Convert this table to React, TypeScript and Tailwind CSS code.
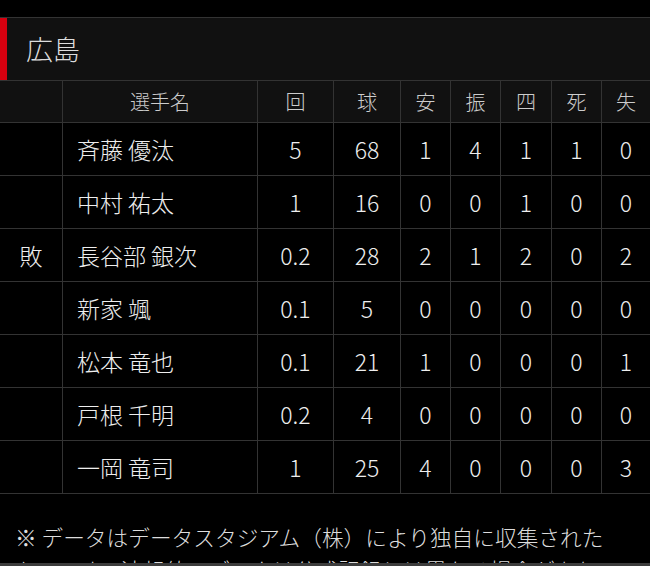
const heads = ["", "選手名", "回", "球", "安", "振", "四", "死", "失"];

const rows: string[][] = [
  ["", "斉藤 優汰", "5", "68", "1", "4", "1", "1", "0"],
  ["", "中村 祐太", "1", "16", "0", "0", "1", "0", "0"],
  ["敗", "長谷部 銀次", "0.2", "28", "2", "1", "2", "0", "2"],
  ["", "新家 颯", "0.1", "5", "0", "0", "0", "0", "0"],
  ["", "松本 竜也", "0.1", "21", "1", "0", "0", "0", "1"],
  ["", "戸根 千明", "0.2", "4", "0", "0", "0", "0", "0"],
  ["", "一岡 竜司", "1", "25", "4", "0", "0", "0", "3"],
];

export default function App() {
  return (
    <div className="relative h-[566px] w-[650px] overflow-hidden bg-black pt-[17px] font-['Noto_Sans_CJK_JP',sans-serif] font-light">
      {/* team title */}
      <div className="flex h-[63px] border-t border-[#333] bg-[#111]">
        <div className="w-[7px] bg-[#d6000f]" />
        <div className="flex items-center pl-[19px] text-[27px] text-[#ddd]">広島</div>
      </div>

      <div className="grid grid-cols-[62px_194px_75px_66px_49px_49px_50px_49px_48px] gap-px bg-[#333] py-px">
        {heads.map((h, i) => (
          <div
            key={`h_${i}`}
            className="flex h-[41px] items-center justify-center bg-[#111] text-[20px] text-[#ccc]"
          >
            {h}
          </div>
        ))}
        {rows.map((row, r) =>
          row.map((cell, c) => (
            <div
              key={`c_${r}_${c}`}
              className={`flex h-[52px] items-center bg-black text-[23px] text-[#eee] ${
                c === 1 ? "justify-start pl-[14px]" : "justify-center"
              }`}
            >
              {cell}
            </div>
          ))
        )}
      </div>

      <p className="pl-[15px] pt-[26px] text-[21.7px] leading-[33px] text-[#ddd]">
        ※ データはデータスタジアム（株）により独自に収集された
        <br />
        ものです。速報値のデータは公式記録とは異なる場合があり
      </p>

      <div className="absolute inset-x-0 bottom-0 h-[3px] bg-[#3c3c3c]" />
    </div>
  );
}
